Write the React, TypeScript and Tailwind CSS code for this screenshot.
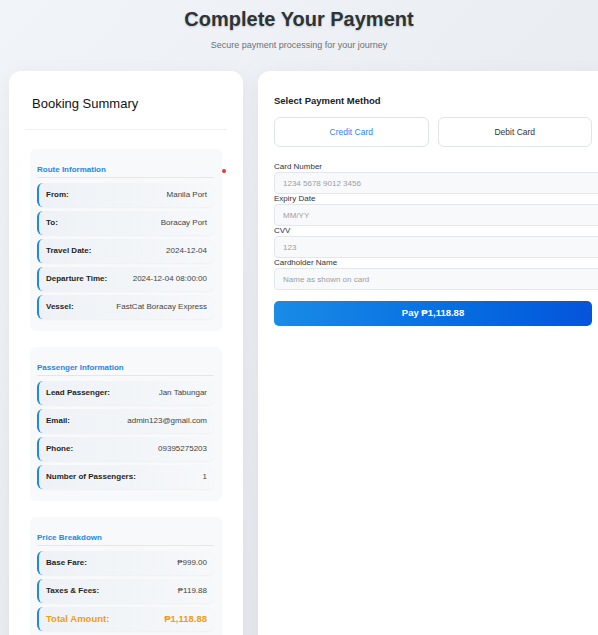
import React from 'react';

type Row = { label: string; value: string; total?: boolean };

const sections: { title: string; dot?: boolean; rows: Row[] }[] = [
  {
    title: 'Route Information',
    dot: true,
    rows: [
      { label: 'From:', value: 'Manila Port' },
      { label: 'To:', value: 'Boracay Port' },
      { label: 'Travel Date:', value: '2024-12-04' },
      { label: 'Departure Time:', value: '2024-12-04 08:00:00' },
      { label: 'Vessel:', value: 'FastCat Boracay Express' },
    ],
  },
  {
    title: 'Passenger Information',
    rows: [
      { label: 'Lead Passenger:', value: 'Jan Tabungar' },
      { label: 'Email:', value: 'admin123@gmail.com' },
      { label: 'Phone:', value: '09395275203' },
      { label: 'Number of Passengers:', value: '1' },
    ],
  },
  {
    title: 'Price Breakdown',
    rows: [
      { label: 'Base Fare:', value: '₱999.00' },
      { label: 'Taxes & Fees:', value: '₱119.88' },
      { label: 'Total Amount:', value: '₱1,118.88', total: true },
    ],
  },
];

const fields = [
  { label: 'Card Number', placeholder: '1234 5678 9012 3456' },
  { label: 'Expiry Date', placeholder: 'MM/YY' },
  { label: 'CVV', placeholder: '123' },
  { label: 'Cardholder Name', placeholder: 'Name as shown on card' },
];

export default function App() {
  return (
    <div className="h-[635px] w-full overflow-hidden bg-gradient-to-br from-[#f1f4f8] via-[#eaedf2] to-[#e4e8ee] font-['Liberation_Sans',Arial,sans-serif]">
      {/* Header */}
      <div className="pt-[7px] text-center">
        <h1 className="text-[20px] leading-[24px] font-bold text-[#2d3436] [text-shadow:0_1px_2px_rgba(0,0,0,0.18)]">
          Complete Your Payment
        </h1>
        <p className="mt-[9px] text-[9px] leading-[11px] text-[#6b7275]">
          Secure payment processing for your journey
        </p>
      </div>

      <div className="mt-[20px] flex items-start gap-[15px] pl-[9px]">
        {/* Booking summary */}
        <div className="w-[234px] shrink-0 rounded-[12px] bg-white px-[16px] pt-[25px] pb-[20px] shadow-[0_4px_20px_rgba(0,0,0,0.06)]">
          <h2 className="px-[7px] text-[13px] leading-[16px] font-medium text-[#111]">Booking Summary</h2>
          <div className="mt-[17px] border-b border-[#eceff3]" />

          <div className="mt-[19px] flex flex-col gap-[16px]">
            {sections.map((s) => (
              <div key={s.title} className="relative mx-[5px] rounded-[6px] bg-[#f7f9fb] pl-[7px] pr-[8px] pt-[16px] pb-[12px]">
                {s.dot && <span className="absolute right-[-4px] top-[19.5px] h-[4px] w-[4px] rounded-full bg-[#e53935]" />}
                <h3 className="mb-[5px] border-b border-[#e3e7ec] pb-[2px] text-[8px] leading-[10px] font-bold text-[#1e88e5]">
                  {s.title}
                </h3>
                <div className="flex flex-col gap-[4px]">
                  {s.rows.map((r) => (
                    <div
                      key={r.label}
                      className="flex h-[24px] items-center justify-between rounded-[6px] border-l-2 border-[#1e88e5] bg-gradient-to-r from-[#eef2f6] to-[#f6f8fa] px-[7px] shadow-[0_1px_2px_rgba(0,0,0,0.04)]"
                    >
                      {r.total ? (
                        <>
                          <span className="text-[9.5px] font-bold text-[#f39c12]">{r.label}</span>
                          <span className="text-[9.5px] font-bold text-[#f39c12]">{r.value}</span>
                        </>
                      ) : (
                        <>
                          <span className="text-[8px] font-bold text-[#1f1f1f]">{r.label}</span>
                          <span className="text-[8px] text-[#444]">{r.value}</span>
                        </>
                      )}
                    </div>
                  ))}
                </div>
              </div>
            ))}
          </div>
        </div>

        {/* Payment form */}
        <div className="h-[620px] w-[350px] shrink-0 rounded-[12px] bg-white px-[16px] pt-[24px] shadow-[0_4px_20px_rgba(0,0,0,0.06)]">
          <h2 className="text-[9.5px] leading-[12px] font-bold text-[#222]">Select Payment Method</h2>
          <div className="mt-[10px] grid grid-cols-2 gap-[9px]">
            <button className="h-[30px] rounded-[6px] border border-[#e1e5ea] bg-white text-[8.5px] text-[#1e88e5]">
              Credit Card
            </button>
            <button className="h-[30px] rounded-[6px] border border-[#e1e5ea] bg-white text-[8.5px] text-[#333]">
              Debit Card
            </button>
          </div>

          <div className="mt-[15px]">
            {fields.map((f) => (
              <div key={f.label}>
                <label className="block text-[8px] leading-[10px] text-[#333]">{f.label}</label>
                <input
                  placeholder={f.placeholder}
                  className="block h-[22px] w-[340px] rounded-[4px] border border-[#e3e7ec] bg-[#f8f9fb] px-[8px] text-[8px] text-[#333] placeholder:text-[#9aa0a6] outline-none"
                />
              </div>
            ))}
          </div>

          <button className="mt-[11px] h-[25px] w-full rounded-[5px] bg-gradient-to-r from-[#1a8be6] to-[#0654db] text-[9.5px] font-bold text-white">
            Pay ₱1,118.88
          </button>
        </div>
      </div>
    </div>
  );
}
